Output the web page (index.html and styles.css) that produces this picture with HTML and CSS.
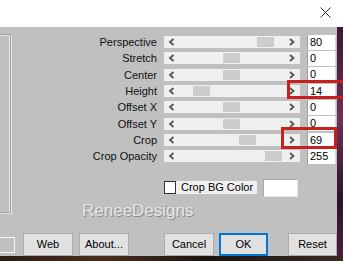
FILE: index.html
```html
<!doctype html>
<html lang="en">
  <head>
    <meta charset="UTF-8" />
    <title>Perspective Crop</title>
    <link rel="stylesheet" href="styles.css">
  </head>
  <body>
    <div class="window">
      <div class="titlebar">
        <svg class="close" width="11" height="11" viewBox="0 0 11 11">
          <path d="M0.5 0.5 L10.5 10.5 M10.5 0.5 L0.5 10.5" stroke="#333" stroke-width="1" fill="none" />
        </svg>
      </div>
      <div class="frame">
        <div class="dialog">
          <div class="upper">
            <div class="preview"></div>
            <div class="controls">
              <div class="params">
                <span class="label">Perspective</span>
                <div class="track"><svg class="arrow" viewBox="0 0 17 12"><path d="M9.5 3 L6 6 L9.5 9" /></svg><div class="trough"><span class="thumb" style="margin-left:76px"></span></div><svg class="arrow" viewBox="0 0 17 12"><path d="M7 3 L10.5 6 L7 9" /></svg></div>
                <span class="value">80</span>

                <span class="label">Stretch</span>
                <div class="track"><svg class="arrow" viewBox="0 0 17 12"><path d="M9.5 3 L6 6 L9.5 9" /></svg><div class="trough"><span class="thumb" style="margin-left:42px"></span></div><svg class="arrow" viewBox="0 0 17 12"><path d="M7 3 L10.5 6 L7 9" /></svg></div>
                <span class="value">0</span>

                <span class="label">Center</span>
                <div class="track"><svg class="arrow" viewBox="0 0 17 12"><path d="M9.5 3 L6 6 L9.5 9" /></svg><div class="trough"><span class="thumb" style="margin-left:42px"></span></div><svg class="arrow" viewBox="0 0 17 12"><path d="M7 3 L10.5 6 L7 9" /></svg></div>
                <span class="value">0</span>

                <span class="label">Height</span>
                <div class="track"><svg class="arrow" viewBox="0 0 17 12"><path d="M9.5 3 L6 6 L9.5 9" /></svg><div class="trough"><span class="thumb" style="margin-left:12px"></span></div><svg class="arrow" viewBox="0 0 17 12"><path d="M7 3 L10.5 6 L7 9" /></svg></div>
                <span class="value">14</span>

                <span class="label">Offset X</span>
                <div class="track"><svg class="arrow" viewBox="0 0 17 12"><path d="M9.5 3 L6 6 L9.5 9" /></svg><div class="trough"><span class="thumb" style="margin-left:42px"></span></div><svg class="arrow" viewBox="0 0 17 12"><path d="M7 3 L10.5 6 L7 9" /></svg></div>
                <span class="value">0</span>

                <span class="label">Offset Y</span>
                <div class="track"><svg class="arrow" viewBox="0 0 17 12"><path d="M9.5 3 L6 6 L9.5 9" /></svg><div class="trough"><span class="thumb" style="margin-left:42px"></span></div><svg class="arrow" viewBox="0 0 17 12"><path d="M7 3 L10.5 6 L7 9" /></svg></div>
                <span class="value">0</span>

                <span class="label">Crop</span>
                <div class="track"><svg class="arrow" viewBox="0 0 17 12"><path d="M9.5 3 L6 6 L9.5 9" /></svg><div class="trough"><span class="thumb" style="margin-left:58px"></span></div><svg class="arrow" viewBox="0 0 17 12"><path d="M7 3 L10.5 6 L7 9" /></svg></div>
                <span class="value">69</span>

                <span class="label">Crop Opacity</span>
                <div class="track"><svg class="arrow" viewBox="0 0 17 12"><path d="M9.5 3 L6 6 L9.5 9" /></svg><div class="trough"><span class="thumb" style="margin-left:84px"></span></div><svg class="arrow" viewBox="0 0 17 12"><path d="M7 3 L10.5 6 L7 9" /></svg></div>
                <span class="value">255</span>
              </div>
              <div class="bgcolor">
                <span class="check"></span>
                <span class="check-label">Crop BG Color</span>
                <span class="swatch"></span>
              </div>
              <div class="brand">ReneeDesigns</div>
            </div>
          </div>
          <div class="buttons">
            <span class="stub"></span>
            <div class="btn btn-web">Web</div>
            <div class="btn btn-about">About...</div>
            <div class="btn btn-cancel">Cancel</div>
            <div class="btn btn-ok">OK</div>
            <div class="btn btn-reset">Reset</div>
          </div>
        </div>
        <div class="edge"></div>
      </div>
      <div class="bottom"></div>
      <div class="mark mark-height"></div>
      <div class="mark mark-crop"></div>
    </div>
  </body>
</html>
```

FILE: styles.css
```css
* {
  margin: 0;
  padding: 0;
  box-sizing: border-box;
}
body {
  font-family: "Liberation Sans", Arial, sans-serif;
  font-size: 11px;
  color: #000;
  background: #c0c0c0;
  overflow: hidden;
}
.window {
  position: relative;
  width: 343px;
  height: 261px;
  display: flex;
  flex-direction: column;
  overflow: hidden;
}
.titlebar {
  height: 27px;
  background: #fff;
  display: flex;
  justify-content: flex-end;
  padding: 7px 12px 0 0;
}
.frame {
  display: flex;
  height: 229px;
}
.dialog {
  width: 337px;
  background: #c0c0c0;
  display: flex;
  flex-direction: column;
}
.edge {
  flex: 1;
  background: linear-gradient(180deg, #3a1a30, #6a3458 40%, #2a1424 75%, #4a2238);
}
.bottom {
  flex: 1;
  background: linear-gradient(90deg, #2a1c14, #4a2e1c 30%, #1c1410 60%, #3a2a22);
}
.upper {
  height: 206px;
  display: flex;
  padding-top: 7px;
}
.preview {
  width: 11px;
  height: 179px;
  border: 1px solid #a0a0a0;
  border-left: none;
  box-shadow: inset -1px 1px #e8e8e8, 1px 1px #e8e8e8;
}
.controls {
  width: 326px;
  display: flex;
  flex-direction: column;
}
.params {
  display: grid;
  grid-template-columns: 146px 136px 29px;
  grid-auto-rows: 16.33px;
  column-gap: 7px;
  align-items: center;
}
.label {
  text-align: right;
  white-space: nowrap;
  line-height: 14px;
  color: #111;
}
.track {
  height: 12px;
  display: flex;
  background: #f0f0f0;
}
.arrow {
  width: 17px;
  height: 12px;
  fill: none;
  stroke: #555;
  stroke-width: 1.8;
}
.trough {
  flex: 1;
  display: flex;
  align-items: center;
}
.thumb {
  width: 17px;
  height: 10px;
  background: #cdcdcd;
}
.value {
  height: 15px;
  line-height: 15px;
  padding-left: 2px;
  background: #fff;
  border-left: 1px solid #a0a0a0;
  border-right: 1px solid #d8d8d8;
  overflow: hidden;
}
.bgcolor {
  display: flex;
  align-items: center;
  height: 18px;
  margin: 14px 0 0 153px;
}
.check {
  width: 12px;
  height: 13px;
  background: #fff;
  border: 1px solid #333;
}
.check-label {
  width: 81px;
  height: 13px;
  line-height: 13px;
  padding-left: 5px;
  background: #f0f0f0;
  white-space: nowrap;
}
.swatch {
  width: 35px;
  height: 18px;
  margin-left: 6px;
  background: #fff;
  border: 1px solid #a8a8a8;
  border-right-color: #e8e8e8;
  border-bottom-color: #e8e8e8;
}
.brand {
  margin: 4px 0 0 71px;
  font-size: 17px;
  line-height: 20px;
  color: #e6e6e6;
  text-shadow: 1px 1px 0 #8a8a8a;
}
.buttons {
  height: 23px;
  display: flex;
  align-items: flex-start;
}
.stub {
  width: 15px;
  height: 16px;
  margin-top: 4px;
  border: 1px solid #f4f4f4;
  border-left: none;
}
.btn {
  width: 50px;
  height: 23px;
  line-height: 21px;
  text-align: center;
  background: #e1e1e1;
  border: 1px solid #adadad;
}
.btn-web {
  margin-left: 8px;
}
.btn-about {
  margin-left: 6px;
}
.btn-cancel {
  margin-left: 35px;
}
.btn-ok {
  width: 49px;
  margin-left: 5px;
  border-color: #0078d7;
  box-shadow: inset 0 0 0 1px #0078d7;
}
.btn-reset {
  width: 49px;
  margin-left: 20px;
}
.mark {
  position: absolute;
  border: 3px solid #c8201c;
}
.mark-height {
  left: 287px;
  top: 80px;
  width: 62px;
  height: 19px;
}
.mark-crop {
  left: 281px;
  top: 127px;
  width: 56px;
  height: 22px;
}
```
